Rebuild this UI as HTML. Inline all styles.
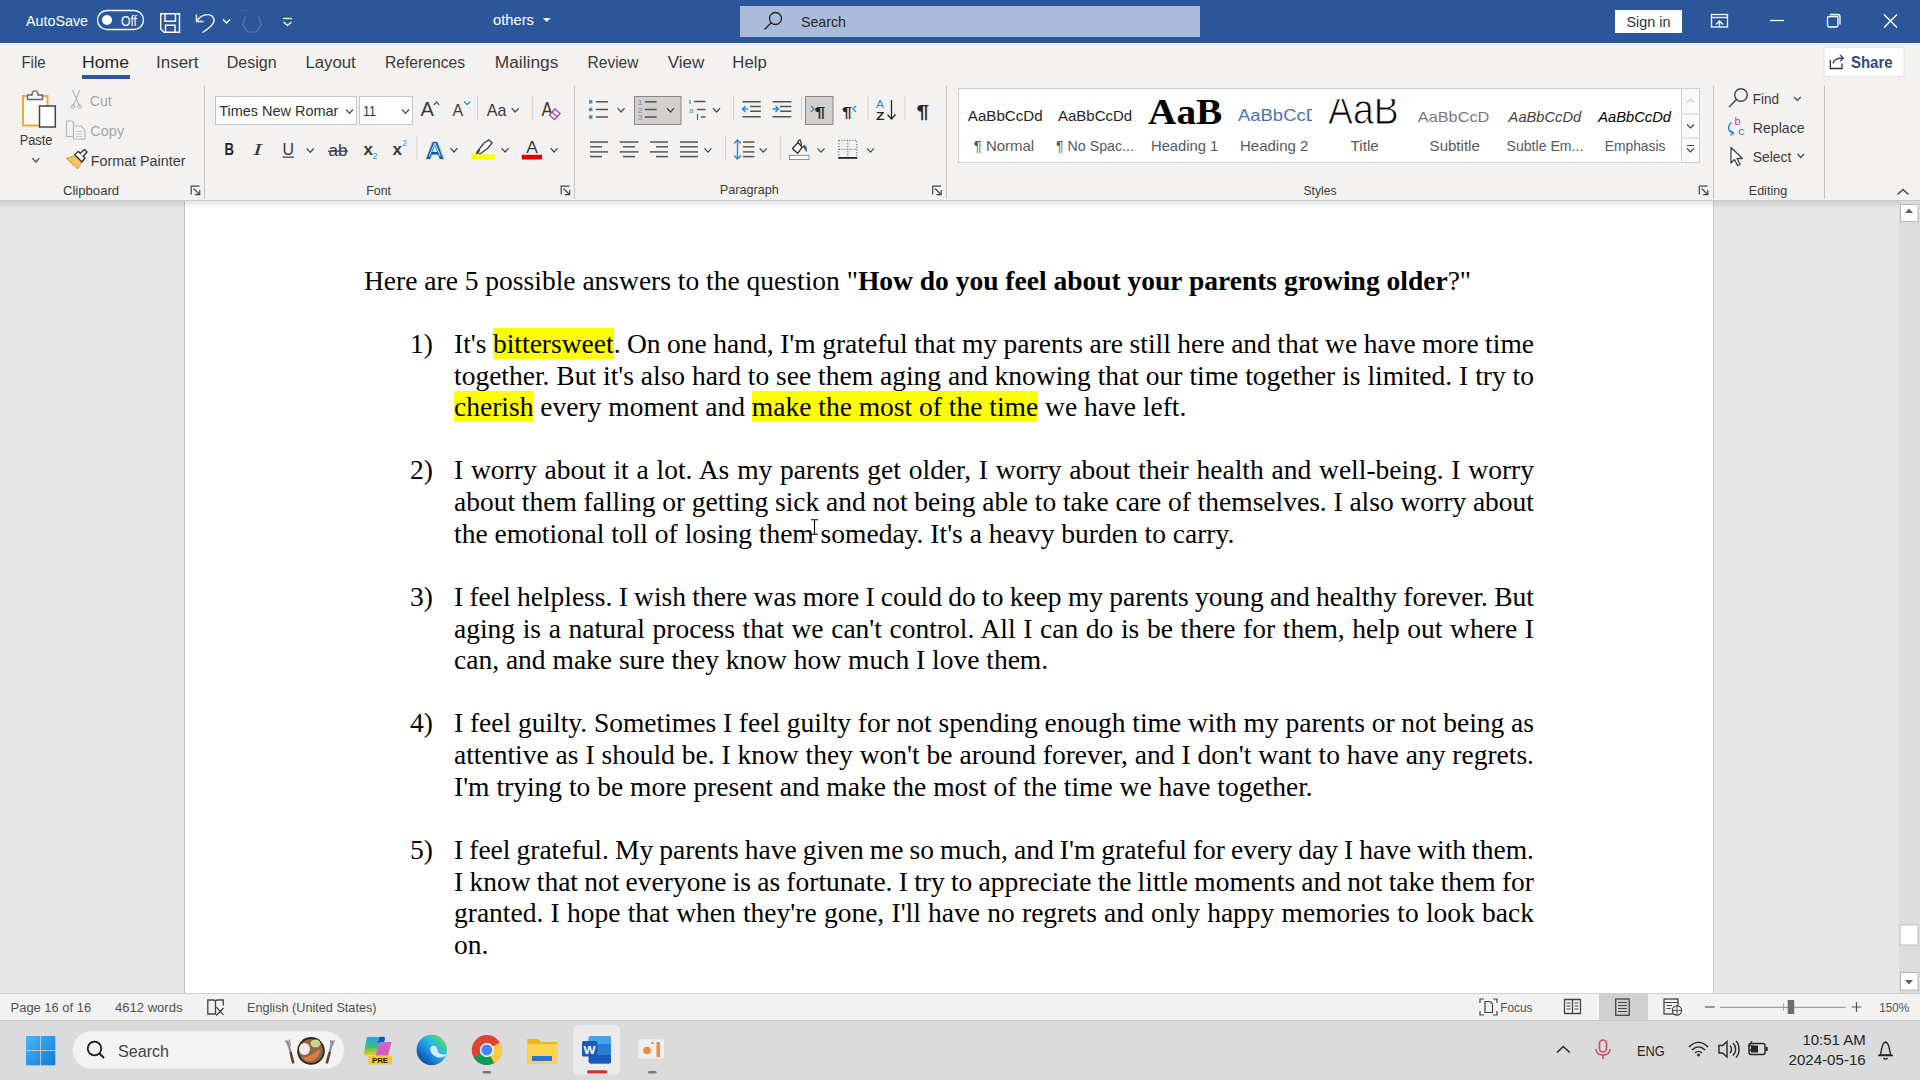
<!DOCTYPE html>
<html><head><meta charset="utf-8">
<style>*{box-sizing:border-box;margin:0;padding:0}
html,body{width:1920px;height:1080px;overflow:hidden;background:#e6e6e6;font-family:"Liberation Sans",sans-serif}
#ui{position:absolute;left:0;top:0;font-family:"Liberation Sans",sans-serif}
.doc{position:absolute;font-family:"Liberation Serif",serif;font-size:27.5px;color:#000;white-space:nowrap;line-height:31.6px}
.hl{background:#ffff00}
</style></head><body>
<svg id="ui" width="1920" height="1080" viewBox="0 0 1920 1080">
<rect x="0" y="0" width="1920" height="43" fill="#2b579a"/>
<rect x="0" y="43" width="1920" height="3" fill="#e6f0f9"/>
<rect x="0" y="46" width="1920" height="154" fill="#f3f2f1"/>
<rect x="0" y="200" width="1920" height="1" fill="#c9c9c9"/>
<rect x="0" y="201" width="1920" height="792" fill="#e6e6e6"/>
<rect x="184" y="201" width="1" height="792" fill="#c3c3c3"/>
<rect x="185" y="201" width="1528" height="792" fill="#ffffff"/>
<rect x="1713" y="201" width="1" height="792" fill="#c8c8c8"/>
<defs><linearGradient id="sh" x1="0" y1="0" x2="0" y2="1"><stop offset="0" stop-color="#000" stop-opacity="0.10"/><stop offset="1" stop-color="#000" stop-opacity="0"/></linearGradient></defs>
<rect x="0" y="201" width="1920" height="8" fill="url(#sh)"/>
<rect x="1899" y="201" width="21" height="792" fill="#dcdcdc"/>
<rect x="1900.5" y="204.5" width="17.5" height="17" fill="#fff" stroke="#b8b8b8" stroke-width="1"/>
<path d="M1905 213 L1909 208.5 L1913 213 Z" fill="#606060"/>
<rect x="1900" y="925" width="18" height="20" fill="#fff" stroke="#c0c0c0" stroke-width="1"/>
<rect x="1900.5" y="972.5" width="17.5" height="17.5" fill="#fff" stroke="#b8b8b8" stroke-width="1"/>
<path d="M1905 980 L1909 984.5 L1913 980 Z" fill="#606060"/>
<rect x="0" y="993" width="1920" height="1" fill="#cfcfcf"/>
<rect x="0" y="994" width="1920" height="26" fill="#f3f2f1"/>
<rect x="0" y="1020" width="1920" height="1" fill="#c6c6c6"/>
<rect x="0" y="1021" width="1920" height="59" fill="#dbdbdb"/>
<text x="26" y="26" font-size="15.5" fill="#ffffff" textLength="62" lengthAdjust="spacingAndGlyphs">AutoSave</text>
<rect x="97.5" y="10.5" width="46" height="19" rx="9.5" fill="none" stroke="#fff" stroke-width="1.3"/>
<circle cx="107" cy="20" r="5" fill="#fff"/>
<text x="121" y="25.5" font-size="14" fill="#ffffff" textLength="16" lengthAdjust="spacingAndGlyphs">Off</text>
<path d="M160.7 13.7 H179.5 V32.2 H164 L160.7 29 Z" fill="none" stroke="#fff" stroke-width="1.4"/>
<path d="M165 13.7 V21.2 H175.5 V13.7" fill="none" stroke="#fff" stroke-width="1.4"/>
<path d="M165.5 32.2 V25.2 H175 V32.2" fill="none" stroke="#fff" stroke-width="1.4"/>
<path d="M197 21 C202 13 214 12 214 21 C214 25 208 29 202.5 32.5" fill="none" stroke="#fff" stroke-width="1.4"/>
<path d="M196.5 14.5 V21.5 H203.5" fill="none" stroke="#fff" stroke-width="1.4"/>
<path d="M223 19.5 L226.5 23 L230 19.5" fill="none" stroke="#fff" stroke-width="1.3"/>
<path d="M245.5 16.5 L242.5 25 L248 32 H256 L261.5 25 L258.5 16.5" fill="none" stroke="#4a74b8" stroke-width="1.5"/><path d="M241 10.5 H248" stroke="#3f69ad" stroke-width="1.2"/>
<path d="M283 18.5 H292" stroke="#fff" stroke-width="1.3"/><path d="M283.5 22 L287.5 25.5 L291.5 22" fill="none" stroke="#fff" stroke-width="1.3"/>
<text x="493" y="25" font-size="15" fill="#ffffff" textLength="41" lengthAdjust="spacingAndGlyphs">others</text>
<path d="M543 18 H550.5 L546.75 22 Z" fill="#fff"/>
<rect x="740" y="6" width="460" height="31" fill="#aabcd9"/>
<circle cx="775.5" cy="18.5" r="6" fill="none" stroke="#262626" stroke-width="1.3"/>
<path d="M771.2 22.8 L764.5 29.5" stroke="#262626" stroke-width="1.4"/>
<text x="801" y="26.5" font-size="15" fill="#262626" textLength="45" lengthAdjust="spacingAndGlyphs">Search</text>
<rect x="1615" y="10" width="67" height="23" fill="#fff"/>
<text x="1626.5" y="26.5" font-size="15" fill="#323130" textLength="44" lengthAdjust="spacingAndGlyphs">Sign in</text>
<rect x="1711.5" y="14.5" width="16" height="12.5" fill="none" stroke="#fff" stroke-width="1.3"/>
<path d="M1711.5 17.5 H1727.5" stroke="#fff" stroke-width="1.3"/><path d="M1716 24.5 L1719.5 21 L1723 24.5 M1719.5 21 V26.5" fill="none" stroke="#fff" stroke-width="1.3"/>
<path d="M1770 20.5 H1784" stroke="#fff" stroke-width="1.3"/>
<rect x="1827.5" y="16.5" width="10.5" height="10.5" rx="1.5" fill="none" stroke="#fff" stroke-width="1.3"/>
<path d="M1830 14.5 H1837.5 Q1840 14.5 1840 17 V24.5" fill="none" stroke="#fff" stroke-width="1.3"/>
<path d="M1884 14.5 L1897 27.5 M1897 14.5 L1884 27.5" stroke="#fff" stroke-width="1.4"/>
<text x="21.5" y="67.5" font-size="16" fill="#3b3a39" textLength="24" lengthAdjust="spacingAndGlyphs">File</text>
<text x="82" y="67.5" font-size="16" fill="#262626" textLength="47" lengthAdjust="spacingAndGlyphs">Home</text>
<text x="156" y="67.5" font-size="16" fill="#3b3a39" textLength="42.5" lengthAdjust="spacingAndGlyphs">Insert</text>
<text x="226.7" y="67.5" font-size="16" fill="#3b3a39" textLength="50" lengthAdjust="spacingAndGlyphs">Design</text>
<text x="305.4" y="67.5" font-size="16" fill="#3b3a39" textLength="50.4" lengthAdjust="spacingAndGlyphs">Layout</text>
<text x="385" y="67.5" font-size="16" fill="#3b3a39" textLength="80" lengthAdjust="spacingAndGlyphs">References</text>
<text x="494.8" y="67.5" font-size="16" fill="#3b3a39" textLength="63.5" lengthAdjust="spacingAndGlyphs">Mailings</text>
<text x="587.5" y="67.5" font-size="16" fill="#3b3a39" textLength="51" lengthAdjust="spacingAndGlyphs">Review</text>
<text x="667.7" y="67.5" font-size="16" fill="#3b3a39" textLength="36.5" lengthAdjust="spacingAndGlyphs">View</text>
<text x="732.3" y="67.5" font-size="16" fill="#3b3a39" textLength="34.4" lengthAdjust="spacingAndGlyphs">Help</text>
<rect x="82" y="75" width="48" height="4" fill="#2b579a"/>
<rect x="1824" y="47.5" width="80" height="29" fill="#fff" stroke="#e4e4e4" stroke-width="1"/>
<path d="M1830.3 60 V68.5 H1842 V63.5" fill="none" stroke="#333" stroke-width="1.3"/>
<path d="M1833 63.5 C1834 59.5 1837.5 58 1843 58 M1840 55 L1843.3 58 L1840 61.3" fill="none" stroke="#3a4a66" stroke-width="1.3"/>
<text x="1851" y="67.5" font-size="16" fill="#2f4b7c" textLength="41.5" lengthAdjust="spacingAndGlyphs" font-weight="bold">Share</text>
<rect x="204.0" y="86" width="1" height="113" fill="#c8c6c4"/>
<rect x="574.0" y="86" width="1" height="113" fill="#c8c6c4"/>
<rect x="946.0" y="86" width="1" height="113" fill="#c8c6c4"/>
<rect x="1713.0" y="86" width="1" height="113" fill="#c8c6c4"/>
<rect x="1824.0" y="86" width="1" height="113" fill="#c8c6c4"/>
<text x="62.9" y="194.7" font-size="13.5" fill="#3b3a39" textLength="56.3" lengthAdjust="spacingAndGlyphs">Clipboard</text>
<text x="366.3" y="194.5" font-size="13.5" fill="#3b3a39" textLength="24.7" lengthAdjust="spacingAndGlyphs">Font</text>
<text x="719.8" y="194.3" font-size="13.5" fill="#3b3a39" textLength="59" lengthAdjust="spacingAndGlyphs">Paragraph</text>
<text x="1303.5" y="194.5" font-size="13.5" fill="#3b3a39" textLength="33" lengthAdjust="spacingAndGlyphs">Styles</text>
<text x="1748.8" y="194.7" font-size="13.5" fill="#3b3a39" textLength="38.3" lengthAdjust="spacingAndGlyphs">Editing</text>
<path d="M191.2 194.5 V186.2 H199.5" fill="none" stroke="#444" stroke-width="1.2"/><path d="M193.5 188.5 L199.5 194.5 M195.0 194.7 H199.7 V190.0" fill="none" stroke="#444" stroke-width="1.2"/>
<path d="M561.2 194.5 V186.2 H569.5" fill="none" stroke="#444" stroke-width="1.2"/><path d="M563.5 188.5 L569.5 194.5 M565.0 194.7 H569.7 V190.0" fill="none" stroke="#444" stroke-width="1.2"/>
<path d="M932.7 194.5 V186.2 H941" fill="none" stroke="#444" stroke-width="1.2"/><path d="M935 188.5 L941 194.5 M936.5 194.7 H941.2 V190.0" fill="none" stroke="#444" stroke-width="1.2"/>
<path d="M1699.3 194.5 V186.2 H1707.6" fill="none" stroke="#444" stroke-width="1.2"/><path d="M1701.6 188.5 L1707.6 194.5 M1703.1 194.7 H1707.8 V190.0" fill="none" stroke="#444" stroke-width="1.2"/>
<path d="M1897.5 194.5 L1903 189.5 L1908.5 194.5" fill="none" stroke="#444" stroke-width="1.3"/>
<rect x="23" y="96" width="24.5" height="29.5" fill="#fdfbf8" stroke="#f0a43a" stroke-width="1.9"/>
<path d="M27.5 99.5 V95 H32 C32 89.5 38 89.5 38 95 H42.5 V99.5 Z" fill="#f4f4f4" stroke="#666" stroke-width="1.4"/>
<rect x="39.5" y="106" width="15.8" height="21" fill="#fff" stroke="#444" stroke-width="1.5"/>
<text x="19.7" y="145.4" font-size="14" fill="#3b3a39" textLength="32.8" lengthAdjust="spacingAndGlyphs">Paste</text>
<path d="M32.3 158.2 L35.8 162.0 L39.3 158.2" fill="none" stroke="#444" stroke-width="1.2"/>
<path d="M72.5 90 L80 107 M80 90 L72.5 107" stroke="#b4b4b4" stroke-width="1.1"/><circle cx="73" cy="106.5" r="2" fill="none" stroke="#b4b4b4"/><circle cx="79.5" cy="106.5" r="2" fill="none" stroke="#b4b4b4"/>
<text x="89.7" y="105.5" font-size="14" fill="#a6a6a6" textLength="22" lengthAdjust="spacingAndGlyphs">Cut</text>
<path d="M66.5 121 H72 L73.5 123 V136.5 H66.5 Z" fill="none" stroke="#b4b4b4" stroke-width="1.1"/><path d="M73.5 126 H81 L85 130 V139 H73.5 Z" fill="#f3f2f1" stroke="#b4b4b4" stroke-width="1.1"/><path d="M76 131.5 H82.5 M76 134 H82.5 M76 136.5 H82.5" stroke="#c4c4c4" stroke-width="0.9"/>
<text x="90.2" y="135.6" font-size="14" fill="#a6a6a6" textLength="34" lengthAdjust="spacingAndGlyphs">Copy</text>
<path d="M66.5 158.5 C70 157 73 156 75 155.5 L81.5 162 C80 165 79 167 77.5 168.5 Z" fill="#f7c46c" stroke="#e8a033" stroke-width="1.1"/><path d="M74.5 154.5 L78.5 151.5 L85 158 L82 162 Z" fill="#fff" stroke="#333" stroke-width="1.4" stroke-linejoin="round"/><path d="M80 153.5 L84.5 149.5 L87 152 L83 156.5" fill="#fff" stroke="#333" stroke-width="1.4" stroke-linejoin="round"/>
<text x="90.8" y="165.7" font-size="14" fill="#3b3a39" textLength="94.6" lengthAdjust="spacingAndGlyphs">Format Painter</text>
<rect x="215.5" y="96.5" width="141" height="28" fill="#fff" stroke="#c8c6c4" stroke-width="1"/>
<text x="219.2" y="115.6" font-size="14.5" fill="#323130" textLength="119.2" lengthAdjust="spacingAndGlyphs">Times New Romar</text>
<path d="M346 109.5 L349.5 113.3 L353 109.5" fill="none" stroke="#444" stroke-width="1.2"/>
<rect x="359.5" y="96.5" width="53" height="28" fill="#fff" stroke="#c8c6c4" stroke-width="1"/>
<text x="363" y="115.6" font-size="14.5" fill="#323130" textLength="13" lengthAdjust="spacingAndGlyphs">11</text>
<path d="M402 109.5 L405.5 113.3 L409 109.5" fill="none" stroke="#444" stroke-width="1.2"/>
<text x="420.6" y="116.4" font-size="21" fill="#3b3a39" textLength="13.4" lengthAdjust="spacingAndGlyphs">A</text>
<path d="M433.8 104.8 L436.5 102 L439.2 104.8" fill="none" stroke="#444" stroke-width="1.2"/>
<text x="452.6" y="116.4" font-size="17" fill="#3b3a39" textLength="10.6" lengthAdjust="spacingAndGlyphs">A</text>
<path d="M464 101.5 L467.2 104.5 L470.4 101.5" fill="none" stroke="#3c8fd0" stroke-width="1.3"/>
<rect x="477" y="96" width="1" height="24" fill="#d2d0ce"/>
<text x="486.7" y="116.4" font-size="17" fill="#3b3a39" textLength="19.7" lengthAdjust="spacingAndGlyphs">Aa</text>
<path d="M511.7 108.2 L515.2 112.0 L518.7 108.2" fill="none" stroke="#444" stroke-width="1.2"/>
<rect x="532" y="96" width="1" height="24" fill="#d2d0ce"/>
<text x="541.5" y="116" font-size="21" fill="#3b3a39" textLength="11.2" lengthAdjust="spacingAndGlyphs">A</text>
<path d="M549.5 115 L555 109 L560 113.5 L554.5 119.5 Z" fill="#fff" stroke="#a64ca6" stroke-width="1.4"/><path d="M552 112 L557.5 117" stroke="#a64ca6" stroke-width="1.4"/>
<text x="224.5" y="154.5" font-size="16" fill="#262626" textLength="9.5" lengthAdjust="spacingAndGlyphs" font-weight="bold">B</text>
<text x="253" y="154.5" font-size="17" fill="#3b3a39" textLength="9" lengthAdjust="spacingAndGlyphs" font-family="Liberation Serif" font-style="italic">I</text>
<text x="282.5" y="154.5" font-size="16" fill="#3b3a39" textLength="11.5" lengthAdjust="spacingAndGlyphs">U</text>
<rect x="282.5" y="156.5" width="11.5" height="1.3" fill="#444"/>
<path d="M306.7 148.5 L310.2 152.3 L313.7 148.5" fill="none" stroke="#444" stroke-width="1.2"/>
<text x="328.5" y="156" font-size="16" fill="#3b3a39" textLength="19" lengthAdjust="spacingAndGlyphs">ab</text>
<rect x="328" y="150.5" width="20" height="1.3" fill="#444"/>
<text x="363.5" y="154.5" font-size="16" fill="#3b3a39" textLength="9.5" lengthAdjust="spacingAndGlyphs" font-weight="bold">x</text>
<text x="372.5" y="159.4" font-size="9" fill="#3c8fd0" textLength="5" lengthAdjust="spacingAndGlyphs">2</text>
<text x="392.5" y="154.5" font-size="16" fill="#3b3a39" textLength="9.5" lengthAdjust="spacingAndGlyphs" font-weight="bold">x</text>
<text x="402.5" y="145.7" font-size="9" fill="#3c8fd0" textLength="4.5" lengthAdjust="spacingAndGlyphs">2</text>
<rect x="416.5" y="136" width="1" height="24" fill="#d2d0ce"/>
<text x="425.4" y="158.5" font-size="24" fill="#1f5c9e" textLength="18.6" lengthAdjust="spacingAndGlyphs" font-weight="bold" stroke="#c2e4f8" stroke-width="2" paint-order="stroke">A</text>
<path d="M429.3 155.8 L434.8 143.2 L440.3 155.8" fill="none" stroke="#c9edfc" stroke-width="1"/>
<path d="M450.5 148.2 L454.0 152.0 L457.5 148.2" fill="none" stroke="#444" stroke-width="1.2"/>
<path d="M477 152 L484 143 L489 140 L492 143 L488 148 L480 154 Z" fill="#fff" stroke="#444" stroke-width="1.4"/><path d="M476 154 L480 150" stroke="#444" stroke-width="1.4"/>
<rect x="471.2" y="154.3" width="23.5" height="5.2" fill="#ffff00"/>
<path d="M501.6 148.2 L505.1 152.0 L508.6 148.2" fill="none" stroke="#444" stroke-width="1.2"/>
<text x="526.2" y="153.2" font-size="16.5" fill="#3b3a39" textLength="11.6" lengthAdjust="spacingAndGlyphs">A</text>
<rect x="521.8" y="154.8" width="20.2" height="4.7" fill="#e00000"/>
<path d="M550.6 148.2 L554.1 152.0 L557.6 148.2" fill="none" stroke="#444" stroke-width="1.2"/>
<rect x="589" y="100.1" width="3.4" height="3.4" fill="#3c8fd0"/>
<path d="M595.8 101.8 H608" stroke="#555" stroke-width="1.5"/>
<rect x="589" y="107.8" width="3.4" height="3.4" fill="#3c8fd0"/>
<path d="M595.8 109.5 H608" stroke="#555" stroke-width="1.5"/>
<rect x="589" y="115.3" width="3.4" height="3.4" fill="#3c8fd0"/>
<path d="M595.8 117 H608" stroke="#555" stroke-width="1.5"/>
<path d="M617.6 108.2 L621.1 112.0 L624.6 108.2" fill="none" stroke="#444" stroke-width="1.2"/>
<rect x="634.5" y="96.5" width="46.5" height="28" fill="#d2d0ce" stroke="#8a8886" stroke-width="1"/>
<text x="637.8" y="105.0" font-size="8" fill="#5a8fc0">1</text>
<path d="M644.8 101.8 H656.5" stroke="#555" stroke-width="1.5"/>
<text x="637.8" y="112.7" font-size="8" fill="#5a8fc0">2</text>
<path d="M644.8 109.5 H656.5" stroke="#555" stroke-width="1.5"/>
<text x="637.8" y="120.2" font-size="8" fill="#5a8fc0">3</text>
<path d="M644.8 117 H656.5" stroke="#555" stroke-width="1.5"/>
<path d="M667 108.2 L670.5 112.0 L674 108.2" fill="none" stroke="#444" stroke-width="1.2"/>
<path d="M690 100 V104" stroke="#3c8fd0" stroke-width="1.3"/><path d="M694 101.5 H705.5" stroke="#555" stroke-width="1.5"/>
<text x="689" y="112.5" font-size="8" fill="#3c8fd0">a</text>
<path d="M697 109.5 H705.5" stroke="#555" stroke-width="1.5"/><path d="M697.5 114 V120" stroke="#555" stroke-width="1.1"/><path d="M701 117 H705.5" stroke="#555" stroke-width="1.5"/>
<path d="M713 108.2 L716.5 112.0 L720 108.2" fill="none" stroke="#444" stroke-width="1.2"/>
<rect x="733" y="96" width="1" height="24" fill="#d2d0ce"/>
<path d="M742.5 101.8 H760.8 M750 106.5 H760.8 M750 111.3 H760.8 M742.5 116.8 H760.8" stroke="#555" stroke-width="1.5"/>
<path d="M748 109 H742.5 M745.5 106 L742.5 109 L745.5 112" fill="none" stroke="#2b88d8" stroke-width="1.5"/>
<path d="M772.5 101.8 H791.4 M780 106.5 H791.4 M780 111.3 H791.4 M772.5 116.8 H791.4" stroke="#555" stroke-width="1.5"/>
<path d="M772.5 109 H778.5 M775.5 106 L778.5 109 L775.5 112" fill="none" stroke="#2b88d8" stroke-width="1.5"/>
<rect x="801" y="96" width="1" height="24" fill="#d2d0ce"/>
<rect x="805.5" y="96.5" width="27.5" height="28" fill="#d2d0ce" stroke="#8a8886" stroke-width="1"/>
<path d="M811 106 L814 109 L811 112" fill="none" stroke="#3c8fd0" stroke-width="1.4"/>
<text x="814.5" y="116.5" font-size="15" fill="#262626" textLength="11" lengthAdjust="spacingAndGlyphs" font-weight="bold">¶</text>
<text x="842" y="116.5" font-size="15" fill="#262626" textLength="10" lengthAdjust="spacingAndGlyphs" font-weight="bold">¶</text>
<path d="M856 106 L853 109 L856 112" fill="none" stroke="#3c8fd0" stroke-width="1.4"/>
<rect x="867.5" y="96" width="1" height="24" fill="#d2d0ce"/>
<text x="876" y="108.2" font-size="10.5" fill="#2b88d8" textLength="8" lengthAdjust="spacingAndGlyphs">A</text>
<text x="876" y="119.6" font-size="10.5" fill="#262626" textLength="8.5" lengthAdjust="spacingAndGlyphs" font-weight="bold">Z</text>
<path d="M891.5 100 V119 M887.5 114.5 L891.5 119 L895.5 114.5" fill="none" stroke="#262626" stroke-width="1.3"/>
<rect x="904.5" y="96" width="1" height="24" fill="#d2d0ce"/>
<text x="916.5" y="117.5" font-size="18" fill="#262626" textLength="12.5" lengthAdjust="spacingAndGlyphs" font-weight="bold">¶</text>
<path d="M590 142 H608" stroke="#555" stroke-width="1.5"/>
<path d="M590 146.8 H602" stroke="#555" stroke-width="1.5"/>
<path d="M590 151.9 H608" stroke="#555" stroke-width="1.5"/>
<path d="M590 156.6 H602" stroke="#555" stroke-width="1.5"/>
<path d="M619.7 142 H638.4" stroke="#555" stroke-width="1.5"/>
<path d="M623 146.8 H635" stroke="#555" stroke-width="1.5"/>
<path d="M619.7 151.9 H638.4" stroke="#555" stroke-width="1.5"/>
<path d="M623 156.6 H635" stroke="#555" stroke-width="1.5"/>
<path d="M650 142 H668" stroke="#555" stroke-width="1.5"/>
<path d="M656 146.8 H668" stroke="#555" stroke-width="1.5"/>
<path d="M650 151.9 H668" stroke="#555" stroke-width="1.5"/>
<path d="M656 156.6 H668" stroke="#555" stroke-width="1.5"/>
<path d="M680 142 H698" stroke="#555" stroke-width="1.5"/>
<path d="M680 146.8 H698" stroke="#555" stroke-width="1.5"/>
<path d="M680 151.9 H698" stroke="#555" stroke-width="1.5"/>
<path d="M680 156.6 H698" stroke="#555" stroke-width="1.5"/>
<path d="M704.4 148.4 L707.9 152.20000000000002 L711.4 148.4" fill="none" stroke="#444" stroke-width="1.2"/>
<rect x="725" y="136" width="1" height="24" fill="#d2d0ce"/>
<path d="M737.5 140 V159 M734 143.5 L737.5 140 L741 143.5 M734 155.5 L737.5 159 L741 155.5" fill="none" stroke="#2b88d8" stroke-width="1.4"/>
<path d="M743 142 H754.4" stroke="#555" stroke-width="1.5"/>
<path d="M743 146.8 H754.4" stroke="#555" stroke-width="1.5"/>
<path d="M743 151.9 H754.4" stroke="#555" stroke-width="1.5"/>
<path d="M743 156.6 H754.4" stroke="#555" stroke-width="1.5"/>
<path d="M759.8 148.4 L763.3 152.20000000000002 L766.8 148.4" fill="none" stroke="#444" stroke-width="1.2"/>
<rect x="780" y="136" width="1" height="24" fill="#d2d0ce"/>
<path d="M792.5 148.5 L798 142.5 L802.2 147.2 L797.6 153.3 Z" fill="#fff" stroke="#333" stroke-width="1.4" stroke-linejoin="round"/><path d="M797.8 143.5 C797.8 140.5 799 139.8 800 140 C801.3 140.4 801.2 142.5 801.2 146" fill="none" stroke="#333" stroke-width="1.3"/><path d="M803.5 145.5 C805 144.5 806.8 146.5 806.5 151.5 C805.5 150 804.5 148 803.5 147.5 Z" fill="#1f5f94" stroke="#1f5f94" stroke-width="0.8"/>
<rect x="789.5" y="155.3" width="19.5" height="4.2" fill="#fff" stroke="#777" stroke-width="0.8"/>
<path d="M817.5 148.4 L821.0 152.20000000000002 L824.5 148.4" fill="none" stroke="#444" stroke-width="1.2"/>
<rect x="838.8" y="140.3" width="18" height="17.8" fill="none" stroke="#555" stroke-width="1" stroke-dasharray="1.1 1.6"/>
<path d="M847.8 140.5 V158 M839 149.3 H856.8" stroke="#555" stroke-width="1" stroke-dasharray="1.1 1.6"/>
<rect x="838.3" y="157" width="19" height="1.8" fill="#262626"/>
<path d="M867 148.4 L870.5 152.20000000000002 L874 148.4" fill="none" stroke="#444" stroke-width="1.2"/>
<rect x="958.5" y="88.5" width="741" height="74" fill="#fff" stroke="#d2d0ce" stroke-width="1"/>
<rect x="1681.5" y="88.5" width="18" height="74" fill="#fafafa" stroke="#d2d0ce" stroke-width="1"/>
<path d="M1682 114 H1699 M1682 138 H1699" stroke="#d2d0ce" stroke-width="1"/>
<path d="M1687 102.5 L1690.5 99.5 L1694 102.5" fill="none" stroke="#c8c8c8" stroke-width="1.1"/>
<path d="M1687 124.5 L1690.5 128.0 L1694 124.5" fill="none" stroke="#444" stroke-width="1.2"/>
<path d="M1687 145.5 H1694 M1687 148.5 L1690.5 152 L1694 148.5" fill="none" stroke="#444" stroke-width="1.1"/>
<text x="967.8" y="120.6" font-size="15.5" fill="#262626" textLength="74.9" lengthAdjust="spacingAndGlyphs">AaBbCcDd</text>
<text x="973.8" y="150.9" font-size="15" fill="#595959" textLength="60.4" lengthAdjust="spacingAndGlyphs">¶ Normal</text>
<text x="1058" y="120.6" font-size="15.5" fill="#262626" textLength="74.2" lengthAdjust="spacingAndGlyphs">AaBbCcDd</text>
<text x="1056" y="150.9" font-size="15" fill="#595959" textLength="78" lengthAdjust="spacingAndGlyphs">¶ No Spac...</text>
<text x="1148" y="123.6" font-size="36.5" fill="#000" textLength="74.3" lengthAdjust="spacingAndGlyphs" font-weight="bold" font-family="Liberation Serif">AaB</text>
<text x="1151" y="150.9" font-size="15" fill="#595959" textLength="67.3" lengthAdjust="spacingAndGlyphs">Heading 1</text>
<svg x="1230" y="88" width="82" height="74"><text x="8" y="32.6" font-size="16" fill="#4d6fb0" textLength="81" lengthAdjust="spacingAndGlyphs">AaBbCcD</text></svg>
<text x="1240" y="150.9" font-size="15" fill="#595959" textLength="68.4" lengthAdjust="spacingAndGlyphs">Heading 2</text>
<svg x="1320" y="99.3" width="90" height="30"><text x="8" y="24.3" font-size="42" fill="#000" stroke="#fff" stroke-width="1" textLength="70.6" lengthAdjust="spacingAndGlyphs">AaB</text></svg>
<text x="1350.6" y="151.4" font-size="15" fill="#595959" textLength="28.2" lengthAdjust="spacingAndGlyphs">Title</text>
<text x="1417.8" y="121.5" font-size="15" fill="#7a7a7a" textLength="71.6" lengthAdjust="spacingAndGlyphs">AaBbCcD</text>
<text x="1429.6" y="151.4" font-size="15" fill="#595959" textLength="50.2" lengthAdjust="spacingAndGlyphs">Subtitle</text>
<text x="1508.6" y="121.5" font-size="15.5" fill="#404040" textLength="72.6" lengthAdjust="spacingAndGlyphs" font-style="italic">AaBbCcDd</text>
<text x="1506.5" y="151.4" font-size="15" fill="#595959" textLength="76.8" lengthAdjust="spacingAndGlyphs">Subtle Em...</text>
<text x="1598.3" y="121.5" font-size="15.5" fill="#000" textLength="72.6" lengthAdjust="spacingAndGlyphs" font-style="italic">AaBbCcDd</text>
<text x="1604.7" y="151.4" font-size="15" fill="#595959" textLength="60.8" lengthAdjust="spacingAndGlyphs">Emphasis</text>
<circle cx="1741" cy="95" r="6.3" fill="none" stroke="#444" stroke-width="1.4"/><path d="M1736.5 99.5 L1729 107" stroke="#444" stroke-width="1.5"/>
<text x="1752.7" y="103.9" font-size="15" fill="#3b3a39" textLength="26.3" lengthAdjust="spacingAndGlyphs">Find</text>
<path d="M1794 97 L1797.4 100.5 L1800.8 97" fill="none" stroke="#444" stroke-width="1.2"/>
<text x="1734.5" y="124.5" font-size="10" fill="#c0399f" textLength="6" lengthAdjust="spacingAndGlyphs">b</text>
<path d="M1731.5 122.5 C1727 126 1728 132 1733 133 M1730.5 130.5 L1733.5 133 L1730.5 135.5" fill="none" stroke="#2b88d8" stroke-width="1.4"/>
<text x="1738" y="134.5" font-size="11" fill="#2b88d8" textLength="6.5" lengthAdjust="spacingAndGlyphs">c</text>
<text x="1752.7" y="132.9" font-size="15" fill="#3b3a39" textLength="51.9" lengthAdjust="spacingAndGlyphs">Replace</text>
<path d="M1731 147.5 V163 L1734.5 159.5 L1737.5 165.5 L1740 164.3 L1737 158.5 H1742.5 Z" fill="#fff" stroke="#444" stroke-width="1.3" stroke-linejoin="round"/>
<text x="1752.7" y="161.8" font-size="15" fill="#3b3a39" textLength="38.8" lengthAdjust="spacingAndGlyphs">Select</text>
<path d="M1797.5 154 L1800.75 157.5 L1804.0 154" fill="none" stroke="#444" stroke-width="1.2"/>
<text x="10.6" y="1011.5" font-size="13" fill="#505050" textLength="80.5" lengthAdjust="spacingAndGlyphs">Page 16 of 16</text>
<text x="115" y="1011.5" font-size="13" fill="#505050" textLength="67.5" lengthAdjust="spacingAndGlyphs">4612 words</text>
<path d="M207.8 1000 H214 Q215.5 1000 215.5 1002 V1014 H207.8 Z M215.5 1002 Q215.5 1000 217 1000 H223.3 V1005.5" fill="none" stroke="#444" stroke-width="1.3"/><path d="M216.3 1007.2 L223.5 1014.8 M223.5 1008 L216.3 1015.5" stroke="#333" stroke-width="1.1"/>
<text x="247" y="1011.5" font-size="13" fill="#505050" textLength="129.5" lengthAdjust="spacingAndGlyphs">English (United States)</text>
<path d="M1480 1003 V999 H1484 M1493 999 H1497 V1003 M1497 1011 V1015 H1493 M1484 1015 H1480 V1011" fill="none" stroke="#444" stroke-width="1.2"/><path d="M1485 1001.5 H1490 L1492.5 1004 V1012.5 H1485 Z" fill="none" stroke="#444" stroke-width="1.2"/>
<text x="1500.2" y="1012" font-size="13.5" fill="#505050" textLength="32.2" lengthAdjust="spacingAndGlyphs">Focus</text>
<path d="M1564.5 999.5 H1572.5 V1013.5 H1564.5 Z M1572.5 999.5 H1580.5 V1013.5 H1572.5" fill="none" stroke="#444" stroke-width="1.3"/><path d="M1566.5 1003 H1570.5 M1566.5 1006 H1570.5 M1566.5 1009 H1570.5 M1574.5 1003 H1578.5 M1574.5 1006 H1578.5 M1574.5 1009 H1578.5" stroke="#444" stroke-width="1"/>
<rect x="1599" y="994" width="49" height="26" fill="#d2d0ce"/>
<rect x="1615.7" y="999" width="13.5" height="16.3" fill="none" stroke="#444" stroke-width="1.3"/><path d="M1618 1002.5 H1627 M1618 1005.5 H1627 M1618 1008.5 H1627 M1618 1011.5 H1627" stroke="#444" stroke-width="1.1"/>
<rect x="1664" y="999" width="14" height="15" fill="none" stroke="#444" stroke-width="1.3"/><path d="M1664 1002.5 H1678 M1666.5 1005.5 H1672 M1666.5 1008.5 H1671" stroke="#444" stroke-width="1.1"/><circle cx="1677" cy="1010.5" r="4.6" fill="#f3f2f1" stroke="#444" stroke-width="1.2"/><path d="M1672.5 1010.5 H1681.5 M1677 1006 V1015" stroke="#444" stroke-width="0.9"/>
<path d="M1705 1007 H1714.5" stroke="#555" stroke-width="1.2"/>
<rect x="1720" y="1006.8" width="125.7" height="1" fill="#8a8a8a"/>
<rect x="1783" y="1003" width="1" height="8" fill="#aaa"/>
<rect x="1787.7" y="1000" width="6.5" height="14" fill="#6d6d6d"/>
<path d="M1851.7 1007 H1861.3 M1856.5 1002 V1012" stroke="#555" stroke-width="1.2"/>
<text x="1879.3" y="1012" font-size="13" fill="#505050" textLength="29.9" lengthAdjust="spacingAndGlyphs">150%</text>
<defs><linearGradient id="win" gradientUnits="userSpaceOnUse" x1="26" y1="1036" x2="55" y2="1065"><stop offset="0" stop-color="#45b9f7"/><stop offset="1" stop-color="#1279d9"/></linearGradient></defs>
<rect x="26" y="1036" width="14.3" height="14.3" fill="url(#win)"/>
<rect x="41" y="1036" width="14.3" height="14.3" fill="url(#win)"/>
<rect x="26" y="1051" width="14.3" height="14.3" fill="url(#win)"/>
<rect x="41" y="1051" width="14.3" height="14.3" fill="url(#win)"/>
<rect x="72.5" y="1031" width="272" height="38" rx="19" fill="#f3f3f3" stroke="#e2e2e2" stroke-width="1"/>
<circle cx="94.5" cy="1048.5" r="6.8" fill="none" stroke="#1a1a1a" stroke-width="1.8"/><path d="M99.5 1053.5 L104 1058" stroke="#1a1a1a" stroke-width="2"/>
<text x="118" y="1056.5" font-size="17" fill="#444" textLength="51" lengthAdjust="spacingAndGlyphs">Search</text>
<circle cx="311" cy="1050.9" r="13.8" fill="#2a2623"/>
<circle cx="311" cy="1050.9" r="12" fill="#8a6a45"/>
<ellipse cx="304.5" cy="1049" rx="5.5" ry="6" fill="#f2ece8"/>
<ellipse cx="315.5" cy="1043.5" rx="5" ry="4" fill="#c9d68f"/>
<path d="M303 1058 C308 1057 314 1054 319 1049 C321 1053 318 1059 311 1061 C307 1062 304 1060 303 1058 Z" fill="#e07a48"/>
<path d="M287.5 1040.5 L290.5 1052" stroke="#8c8c8c" stroke-width="2.2"/><path d="M290.5 1052 L293.3 1063.4" stroke="#6b3f2a" stroke-width="2.6"/><path d="M285.5 1040 L288 1046 M289.5 1039.5 L290.5 1046" stroke="#9a9a9a" stroke-width="1.2"/>
<path d="M332.5 1040.5 L329.8 1052" stroke="#8c8c8c" stroke-width="2.2"/><path d="M329.8 1052 L326.7 1063.4" stroke="#6b3f2a" stroke-width="2.6"/><path d="M330.5 1040 L331 1046 M334.5 1040 L332.5 1046" stroke="#9a9a9a" stroke-width="1.2"/>
<defs><linearGradient id="cop1" x1="0" y1="0" x2="0" y2="1"><stop offset="0" stop-color="#2d9cf0"/><stop offset="0.55" stop-color="#3fbf6a"/><stop offset="1" stop-color="#f2d21b"/></linearGradient><linearGradient id="cop2" x1="0" y1="0" x2="1" y2="1"><stop offset="0" stop-color="#b86ee8"/><stop offset="1" stop-color="#f0509a"/></linearGradient></defs>
<path d="M367 1037 H382 Q385 1037 384 1040 L378.5 1055.5 H363.5 Z" fill="url(#cop1)"/>
<path d="M379.5 1036.8 H383 Q386 1037 384.5 1041 L383 1043 H378 Z" fill="#1a4fc4"/>
<path d="M379.5 1042 H391.5 L388 1055.5 H375.5 Z" fill="url(#cop2)"/>
<rect x="368.3" y="1056" width="23.7" height="8.4" fill="#f6cc1a"/>
<text x="372" y="1063.3" font-size="7.5" fill="#1a1a1a" textLength="16" lengthAdjust="spacingAndGlyphs" font-weight="bold">PRE</text>
<defs><linearGradient id="edg" x1="0.9" y1="0.2" x2="0.2" y2="0.9"><stop offset="0" stop-color="#52d96a"/><stop offset="0.35" stop-color="#27b7e6"/><stop offset="0.7" stop-color="#1b7fd6"/><stop offset="1" stop-color="#0d4ea8"/></linearGradient></defs>
<circle cx="431.8" cy="1050" r="15.2" fill="url(#edg)"/>
<path d="M430.3 1048.5 C430.8 1045.2 435 1044.8 436.7 1047.5 C437.7 1049.5 437.2 1052 440.2 1053.8 C442.2 1054.8 445 1054.8 446.8 1054.2 C444.3 1057.8 438.5 1058.3 435 1056.2 C431.8 1054.3 429.8 1051.5 430.3 1048.5 Z" fill="#d6ecf5"/>
<circle cx="486.8" cy="1050" r="15" fill="#db4437"/><path d="M486.8 1050 L473.8 1057.5 A15 15 0 0 0 494.3 1063 Z" fill="#0f9d58"/><path d="M486.8 1050 L494.3 1063 A15 15 0 0 0 499.8 1042.5 Z" fill="#ffcd40"/><circle cx="486.8" cy="1050" r="7" fill="#fff"/><circle cx="486.8" cy="1050" r="5.5" fill="#4285f4"/>
<rect x="482.5" y="1071" width="8.5" height="2.5" rx="1.2" fill="#7a7a7a"/>
<path d="M527.3 1039 H538 L541 1042 H557.2 V1063.8 H527.3 Z" fill="#f3b41f"/><rect x="527.3" y="1044" width="29.9" height="19.8" fill="#ffd34e"/><rect x="532" y="1056" width="20" height="5" fill="#1f7ad6"/>
<rect x="573.2" y="1025.3" width="47" height="49.2" rx="5" fill="#ebebeb"/>
<rect x="588.7" y="1036" width="22.3" height="27.6" rx="2" fill="#2b7cd3"/><rect x="588.7" y="1036" width="22.3" height="8" rx="2" fill="#41a5ee"/><rect x="588.7" y="1055" width="22.3" height="8.6" rx="2" fill="#185abd"/>
<rect x="582" y="1041" width="15.3" height="15.6" rx="1.5" fill="#185abd"/>
<text x="583.5" y="1053.5" font-size="11" fill="#fff" textLength="12" lengthAdjust="spacingAndGlyphs" font-weight="bold">W</text>
<rect x="587" y="1070.2" width="20.4" height="3.2" rx="1.5" fill="#d93025"/>
<rect x="638.4" y="1039.2" width="25.6" height="19.2" rx="2" fill="#f0efef"/><circle cx="647" cy="1050.5" r="3.8" fill="#f08a42"/><rect x="656.5" y="1042" width="3.5" height="15" fill="#f08a42"/><circle cx="652.5" cy="1043" r="1.3" fill="#f08a42"/>
<rect x="648" y="1071" width="8.5" height="2.5" rx="1.2" fill="#7a7a7a"/>
<path d="M1557 1052.5 L1563.3 1046.5 L1569.7 1052.5" fill="none" stroke="#262626" stroke-width="1.6"/>
<rect x="1599.5" y="1040" width="7" height="12" rx="3.5" fill="none" stroke="#d04a5a" stroke-width="1.6"/><path d="M1596 1049 C1596 1057 1610 1057 1610 1049 M1603 1055 V1059" fill="none" stroke="#d04a5a" stroke-width="1.6"/>
<text x="1637" y="1055.6" font-size="14.5" fill="#262626" textLength="27.8" lengthAdjust="spacingAndGlyphs">ENG</text>
<path d="M1689 1047 C1695 1041 1702 1041 1708 1047 M1692 1050 C1696 1046 1701 1046 1705 1050 M1695 1053 C1697 1051 1700 1051 1702 1053" fill="none" stroke="#262626" stroke-width="1.5"/><circle cx="1698.5" cy="1055" r="1.4" fill="#262626"/>
<path d="M1719 1045.5 H1722.5 L1727 1041.5 V1057 L1722.5 1053 H1719 Z" fill="none" stroke="#262626" stroke-width="1.4"/><path d="M1730 1045.5 C1732 1047.5 1732 1051 1730 1053 M1733 1043 C1736.5 1046.5 1736.5 1052 1733 1055.5 M1736 1041 C1740 1045 1740 1053.5 1736 1057.5" fill="none" stroke="#262626" stroke-width="1.4"/>
<rect x="1749" y="1043.5" width="16" height="11" rx="2" fill="none" stroke="#262626" stroke-width="1.5"/><rect x="1765.5" y="1047" width="2.2" height="4" fill="#262626"/><rect x="1751" y="1045.5" width="7" height="7" fill="#262626"/><path d="M1752 1041 L1749 1046 L1753 1046 L1750 1051" fill="none" stroke="#262626" stroke-width="1.2"/>
<text x="1802.4" y="1044.8" font-size="15" fill="#262626" textLength="63.3" lengthAdjust="spacingAndGlyphs">10:51 AM</text>
<text x="1788.5" y="1064.6" font-size="15" fill="#262626" textLength="77.2" lengthAdjust="spacingAndGlyphs">2024-05-16</text>
<path d="M1880 1055 C1882 1052 1881 1043 1885.5 1042 C1890 1043 1889 1052 1891 1055 Z" fill="none" stroke="#262626" stroke-width="1.4" stroke-linejoin="round"/><path d="M1878 1055.5 H1893 M1883.5 1058 C1884.5 1059.5 1886.5 1059.5 1887.5 1058" fill="none" stroke="#262626" stroke-width="1.4"/>
<path d="M811 519.8 H818 M811 534.2 H818 M814.5 519.8 V534.2" stroke="#000" stroke-width="1.1"/>
</svg>

<div class="doc" style="left:364px;top:264.52px">Here are 5 possible answers to the question "<b>How do you feel about your parents growing older</b>?"</div>
<div class="doc" style="left:454px;top:327.92px;word-spacing:-0.370px;">It's <span class=hl>bittersweet</span>. On one hand, I'm grateful that my parents are still here and that we have more time</div>
<div class="doc" style="left:410px;top:327.92px">1)</div>
<div class="doc" style="left:454px;top:359.55px;word-spacing:0.023px;">together. But it's also hard to see them aging and knowing that our time together is limited. I try to</div>
<div class="doc" style="left:454px;top:391.18px;"><span class=hl>cherish</span> every moment and <span class=hl>make the most of the time</span> we have left.</div>
<div class="doc" style="left:454px;top:454.44px;word-spacing:0.950px;">I worry about it a lot. As my parents get older, I worry about their health and well-being. I worry</div>
<div class="doc" style="left:410px;top:454.44px">2)</div>
<div class="doc" style="left:454px;top:486.07px;word-spacing:-0.118px;">about them falling or getting sick and not being able to take care of themselves. I also worry about</div>
<div class="doc" style="left:454px;top:517.70px;">the emotional toll of losing them someday. It's a heavy burden to carry.</div>
<div class="doc" style="left:454px;top:580.96px;word-spacing:-0.595px;">I feel helpless. I wish there was more I could do to keep my parents young and healthy forever. But</div>
<div class="doc" style="left:410px;top:580.96px">3)</div>
<div class="doc" style="left:454px;top:612.59px;word-spacing:0.756px;">aging is a natural process that we can't control. All I can do is be there for them, help out where I</div>
<div class="doc" style="left:454px;top:644.22px;">can, and make sure they know how much I love them.</div>
<div class="doc" style="left:454px;top:707.48px;word-spacing:-0.109px;">I feel guilty. Sometimes I feel guilty for not spending enough time with my parents or not being as</div>
<div class="doc" style="left:410px;top:707.48px">4)</div>
<div class="doc" style="left:454px;top:739.11px;word-spacing:0.028px;">attentive as I should be. I know they won't be around forever, and I don't want to have any regrets.</div>
<div class="doc" style="left:454px;top:770.74px;">I'm trying to be more present and make the most of the time we have together.</div>
<div class="doc" style="left:454px;top:834.00px;word-spacing:-0.811px;">I feel grateful. My parents have given me so much, and I'm grateful for every day I have with them.</div>
<div class="doc" style="left:410px;top:834.00px">5)</div>
<div class="doc" style="left:454px;top:865.63px;word-spacing:-0.633px;">I know that not everyone is as fortunate. I try to appreciate the little moments and not take them for</div>
<div class="doc" style="left:454px;top:897.26px;word-spacing:0.371px;">granted. I hope that when they're gone, I'll have no regrets and only happy memories to look back</div>
<div class="doc" style="left:454px;top:928.89px;">on.</div>

</body></html>
